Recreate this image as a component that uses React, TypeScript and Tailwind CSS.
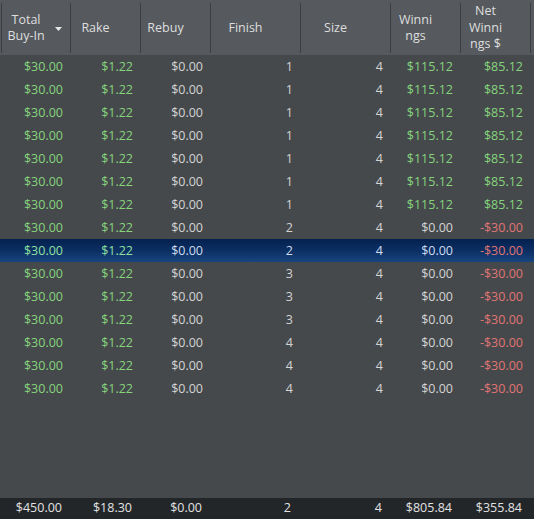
import React from 'react';

interface Row {
  buyIn: string;
  rake: string;
  rebuy: string;
  finish: number;
  size: number;
  winnings: string;
  net: string;
}

const win: Omit<Row, 'finish'> = {
  buyIn: '$30.00',
  rake: '$1.22',
  rebuy: '$0.00',
  size: 4,
  winnings: '$115.12',
  net: '$85.12',
};
const loss: Omit<Row, 'finish'> = {
  buyIn: '$30.00',
  rake: '$1.22',
  rebuy: '$0.00',
  size: 4,
  winnings: '$0.00',
  net: '-$30.00',
};

const rows: Row[] = [
  ...[1, 1, 1, 1, 1, 1, 1].map((f) => ({ ...win, finish: f })),
  ...[2, 2, 3, 3, 3, 4, 4, 4].map((f) => ({ ...loss, finish: f })),
];

const SELECTED = 8;

// grid template shared by header, rows and footer
const cols = 'grid grid-cols-[2px_69px_70px_70px_90px_90px_70px_70px_1fr]';

const HeaderCell: React.FC<{ children: React.ReactNode; arrow?: boolean }> = ({ children, arrow }) => (
  <div className="relative flex items-center justify-center border-r border-[#3c3f42] pr-[20px] text-center leading-[16.5px]">
    <span>{children}</span>
    {arrow && (
      <svg className="absolute right-[8px] top-[24px]" width="7" height="4" viewBox="0 0 7 4">
        <path d="M0 0 L7 0 L3.5 4 Z" fill="#e8e8e8" />
      </svg>
    )}
  </div>
);

const App: React.FC = () => {
  return (
    <div
      className="flex h-[519px] w-[534px] flex-col overflow-hidden bg-[#45494c] text-[12.5px] text-[#d4d4d4]"
      style={{ fontFamily: "'Open Sans', 'Noto Sans', sans-serif" }}
    >
      {/* header */}
      <div className={`${cols} h-[55px] bg-[#565a5e] pt-[3px] pb-[2px] text-[#dedede]`}>
        <div className="border-r border-[#3c3f42]" />
        <HeaderCell arrow>
          Total
          <br />
          Buy-In
        </HeaderCell>
        <HeaderCell>Rake</HeaderCell>
        <HeaderCell>Rebuy</HeaderCell>
        <HeaderCell>Finish</HeaderCell>
        <HeaderCell>Size</HeaderCell>
        <HeaderCell>
          Winni
          <br />
          ngs
        </HeaderCell>
        <HeaderCell>
          Net
          <br />
          Winni
          <br />
          ngs $
        </HeaderCell>
        <div />
      </div>

      {/* rows */}
      <div className="flex flex-col">
        {rows.map((r, i) => {
          const sel = i === SELECTED;
          const plain = sel ? 'text-[#cfdcf0]' : 'text-[#d4d4d4]';
          const green = sel ? 'text-[#8ee0a0]' : 'text-[#86d47c]';
          return (
            <div
              key={i}
              className={`${cols} h-[23px] items-center pt-[1px] text-right ${
                sel ? 'bg-gradient-to-b from-[#04214f] via-[#0c2f63] to-[#18457e]' : ''
              }`}
            >
              <div />
              <div className={`pr-[8px] ${green}`}>{r.buyIn}</div>
              <div className={`pr-[8px] ${green}`}>{r.rake}</div>
              <div className={`pr-[8px] ${plain}`}>{r.rebuy}</div>
              <div className={`pr-[8px] ${plain}`}>{r.finish}</div>
              <div className={`pr-[8px] ${plain}`}>{r.size}</div>
              <div className={`pr-[8px] ${r.winnings === '$0.00' ? plain : green}`}>{r.winnings}</div>
              <div className={`pr-[8px] ${r.net.startsWith('-') ? 'text-[#e07474]' : green}`}>{r.net}</div>
              <div />
            </div>
          );
        })}
      </div>

      <div className="flex-1" />

      {/* totals */}
      <div className={`${cols} h-[21px] items-center bg-[#232629] text-right text-[#e2e2e2]`}>
        <div />
        <div className="pr-[9px]">$450.00</div>
        <div className="pr-[9px]">$18.30</div>
        <div className="pr-[9px]">$0.00</div>
        <div className="pr-[10px]">2</div>
        <div className="pr-[9px]">4</div>
        <div className="pr-[9px]">$805.84</div>
        <div className="pr-[9px]">$355.84</div>
        <div />
      </div>
    </div>
  );
};

export default App;
